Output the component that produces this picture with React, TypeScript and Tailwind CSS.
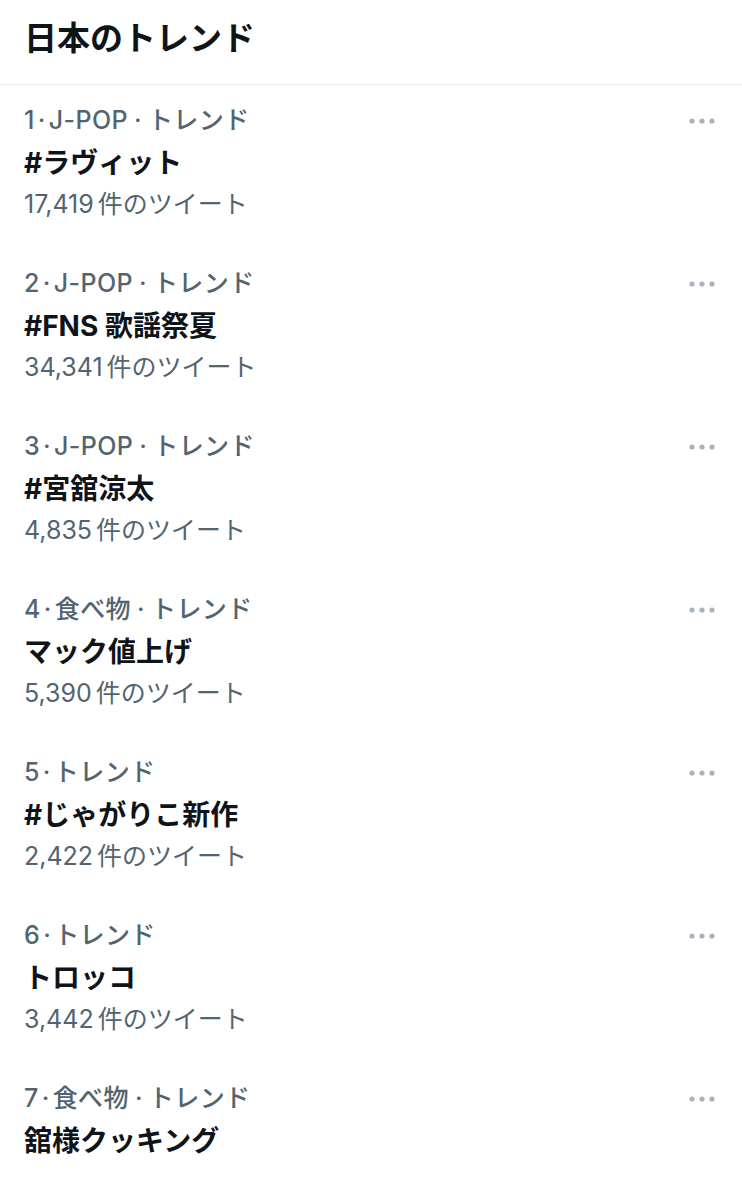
import React from 'react';

interface Trend {
  rank: number;
  category?: string;
  name: string;
  count?: string;
}

const trends: Trend[] = [
  { rank: 1, category: 'J-POP', name: '#ラヴィット', count: '17,419' },
  { rank: 2, category: 'J-POP', name: '#FNS 歌謡祭夏', count: '34,341' },
  { rank: 3, category: 'J-POP', name: '#宮舘涼太', count: '4,835' },
  { rank: 4, category: '食べ物', name: 'マック値上げ', count: '5,390' },
  { rank: 5, name: '#じゃがりこ新作', count: '2,422' },
  { rank: 6, name: 'トロッコ', count: '3,442' },
  { rank: 7, category: '食べ物', name: '舘様クッキング' },
];

const MoreDots = () => (
  <svg width="28" height="8" viewBox="0 0 28 8" className="text-[#aab3bb]">
    <circle cx="4" cy="4" r="2.6" fill="currentColor" />
    <circle cx="14" cy="4" r="2.6" fill="currentColor" />
    <circle cx="24" cy="4" r="2.6" fill="currentColor" />
  </svg>
);

const TrendRow: React.FC<{ trend: Trend }> = ({ trend }) => (
  <div className="flex items-start justify-between pl-6 pr-[26px] pt-[15px] pb-[22px]">
    <div className="flex flex-col">
      <div className="h-[42px] flex items-center text-[25px] font-medium text-[#536471] tracking-[0.4px]">
        {trend.rank}
        <span className="mx-[3px]">·</span>
        {trend.category && (
          <>
            {trend.category}
            <span className="mx-[6px]">·</span>
          </>
        )}
        トレンド
      </div>
      <div className="h-[42px] flex items-center text-[28px] font-bold text-[#0f1419]">
        {trend.name}
      </div>
      {trend.count && (
        <div className="h-[42px] flex items-center text-[25px] font-normal text-[#536471]">
          {trend.count}
          <span className="ml-[4px]">件のツイート</span>
        </div>
      )}
    </div>
    <div className="h-[42px] flex items-center">
      <MoreDots />
    </div>
  </div>
);

export default function App() {
  return (
    <div
      className="w-[742px] h-[1200px] bg-white overflow-hidden"
      style={{ fontFamily: 'Inter, "Noto Sans CJK JP", sans-serif' }}
    >
      <div className="h-[85px] flex items-center px-6 border-b border-[#e6e9eb]">
        <h1 className="text-[33px] font-bold text-[#0f1419] -mt-[6px]">日本のトレンド</h1>
      </div>
      <div className="flex flex-col">
        {trends.map((t) => (
          <TrendRow key={t.rank} trend={t} />
        ))}
      </div>
    </div>
  );
}
